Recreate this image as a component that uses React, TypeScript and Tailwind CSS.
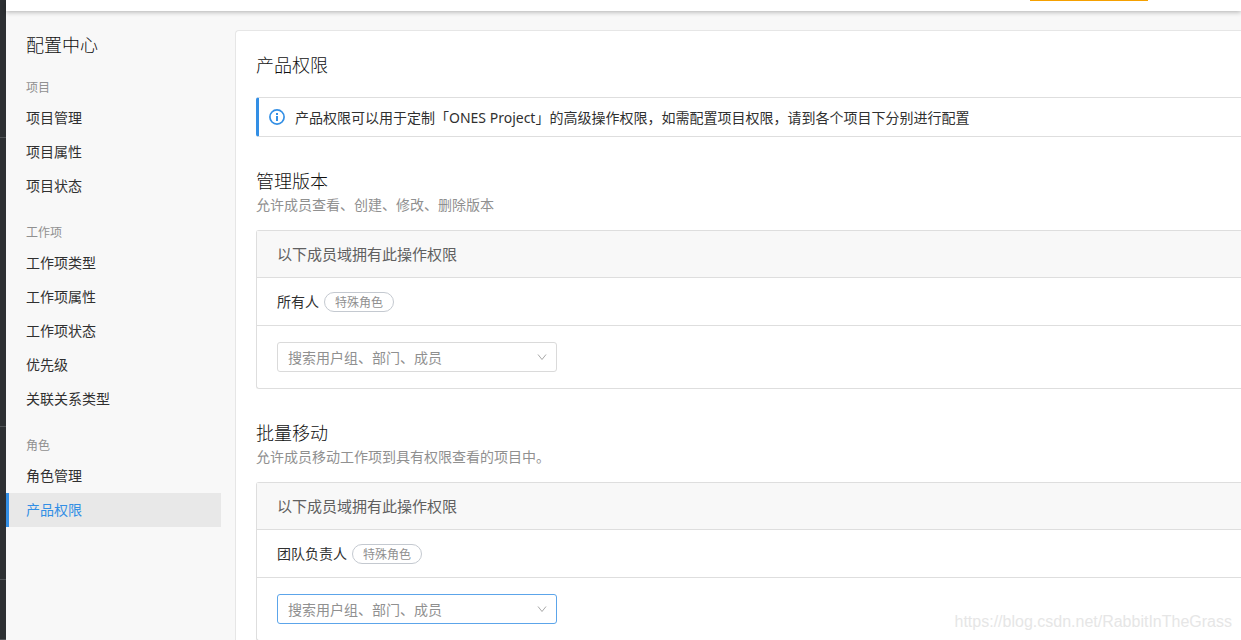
import React from 'react';

type NavGroup = { label: string; items: string[] };

const NAV: NavGroup[] = [
  { label: '项目', items: ['项目管理', '项目属性', '项目状态'] },
  { label: '工作项', items: ['工作项类型', '工作项属性', '工作项状态', '优先级', '关联关系类型'] },
  { label: '角色', items: ['角色管理', '产品权限'] },
];

const ACTIVE = '产品权限';

type Permission = { id: string; title: string; description: string; member: string; focused: boolean };

const PERMISSIONS: Permission[] = [
  { id: 'version', title: '管理版本', description: '允许成员查看、创建、修改、删除版本', member: '所有人', focused: false },
  { id: 'move', title: '批量移动', description: '允许成员移动工作项到具有权限查看的项目中。', member: '团队负责人', focused: true },
];

function InfoIcon() {
  return (
    <svg className="size-4 shrink-0 text-[#338fe5]" viewBox="0 0 16 16" fill="none" aria-hidden="true">
      <circle cx="8" cy="8" r="7.1" stroke="currentColor" strokeWidth="1.7" />
      <rect x="7" y="4" width="2" height="2" fill="currentColor" />
      <rect x="7" y="7" width="2" height="5" fill="currentColor" />
    </svg>
  );
}

function Rail() {
  return (
    <div className="flex w-[6px] shrink-0 flex-col overflow-hidden bg-[#2d3033]">
      <div className="h-[138px] shrink-0 border-b border-[#505356]" />
      <div className="h-[289px] shrink-0 border-b border-[#505356]" />
      <div className="h-[153px] shrink-0 border-b border-[#505356]" />
      <div className="h-[60px] shrink-0 border-b border-[#505356]" />
    </div>
  );
}

function Sidebar() {
  return (
    <nav className="w-[215px] shrink-0 pt-[22px]" aria-label="配置中心">
      <h1 className="mb-4 pl-5 text-[18px] font-light leading-6 text-[#101010]">配置中心</h1>
      <div className="flex flex-col gap-[15px]">
        {NAV.map((group) => (
          <div key={group.label}>
            <h2 className="h-7 pl-5 text-xs leading-[30px] text-[#909090]">{group.label}</h2>
            <ul>
              {group.items.map((item) => (
                <li key={item}>
                  <a
                    href="#"
                    aria-current={item === ACTIVE ? 'page' : undefined}
                    className={
                      item === ACTIVE
                        ? 'block border-l-[3px] border-[#338fe5] bg-[#e8e8e8] pl-[17px] text-sm leading-[34px] text-[#338fe5]'
                        : 'block pl-5 text-sm leading-[34px] text-[#303030]'
                    }
                  >
                    {item}
                  </a>
                </li>
              ))}
            </ul>
          </div>
        ))}
      </div>
    </nav>
  );
}

function MemberSelect({ id, focused }: { id: string; focused: boolean }) {
  return (
    <div className="relative w-[280px]">
      <select
        id={id}
        aria-label="搜索用户组、部门、成员"
        defaultValue=""
        className={
          focused
            ? 'block h-[30px] w-full appearance-none rounded-[3px] border border-[#5ca5ea] bg-white pl-[10px] pr-8 pt-px text-sm text-[#909090] outline-none'
            : 'block h-[30px] w-full appearance-none rounded-[3px] border border-[#dadada] bg-white pl-[10px] pr-8 pt-px text-sm text-[#909090] outline-none'
        }
      >
        <option value="">搜索用户组、部门、成员</option>
      </select>
      <svg className="pointer-events-none absolute right-[10px] top-[10px] size-[10px]" viewBox="0 0 10 10" fill="none" aria-hidden="true">
        <path d="M1 2.5 5 7.5 9 2.5" stroke="#a8a8a8" strokeWidth="1" />
      </svg>
    </div>
  );
}

function PermissionSection({ permission }: { permission: Permission }) {
  return (
    <section className="mt-[30px]">
      <h3 className="text-[18px] font-light leading-7 text-[#101010]">{permission.title}</h3>
      <p className="text-sm leading-5 text-[#909090]">{permission.description}</p>
      <div className="mt-[15px] rounded-l-[3px] border border-r-0 border-[#dedede]">
        <div className="border-b border-[#dedede] bg-[#f8f8f8] pl-5 text-[15px] leading-[46px] text-[#606060]">
          以下成员域拥有此操作权限
        </div>
        <div className="flex h-12 items-center gap-[5px] border-b border-[#dedede] pl-5">
          <span className="text-sm text-[#303030]">{permission.member}</span>
          <span className="h-5 rounded-full border border-[#c4c9d0] px-[10px] text-xs leading-5 text-[#909090]">特殊角色</span>
        </div>
        <div className="py-4 pl-5">
          <MemberSelect id={permission.id} focused={permission.focused} />
        </div>
      </div>
    </section>
  );
}

export default function App() {
  return (
    <div className="relative flex h-screen overflow-hidden bg-[#f8f8f8] font-['Noto_Sans','Noto_Sans_CJK_SC',sans-serif]">
      <Rail />
      <div className="flex min-w-0 flex-1 flex-col">
        <header className="flex h-[11px] shrink-0 justify-end bg-white pr-[93px] shadow-[0_1px_5px_rgba(0,0,0,0.3)]">
          <div className="h-px w-[118px] bg-[#f5a000]" />
        </header>
        <div className="flex min-h-0 flex-1">
          <Sidebar />
          <main className="ml-[14px] mt-[19px] min-w-0 flex-1 overflow-hidden rounded-tl-[4px] border-l border-t border-[#e6e6e6] bg-white pl-5 pt-[22px]">
            <h2 className="text-[18px] font-light leading-6 text-[#101010]">产品权限</h2>
            <div className="mt-5 flex h-10 items-center gap-[10px] rounded-l-[3px] border-y border-l-[3px] border-y-[#dedede] border-l-[#338fe5] pl-[10px]">
              <InfoIcon />
              <p className="whitespace-nowrap pt-px text-sm leading-6 text-[#303030]">
                产品权限可以用于定制「ONES Project」的高级操作权限，如需配置项目权限，请到各个项目下分别进行配置
              </p>
            </div>
            {PERMISSIONS.map((permission) => (
              <PermissionSection key={permission.id} permission={permission} />
            ))}
          </main>
        </div>
      </div>
      <div className="pointer-events-none absolute bottom-[9px] right-[9px] font-['Liberation_Sans',sans-serif] text-base leading-[18px] text-[#e6e6e6]">
        https://blog.csdn.net/RabbitInTheGrass
      </div>
    </div>
  );
}
